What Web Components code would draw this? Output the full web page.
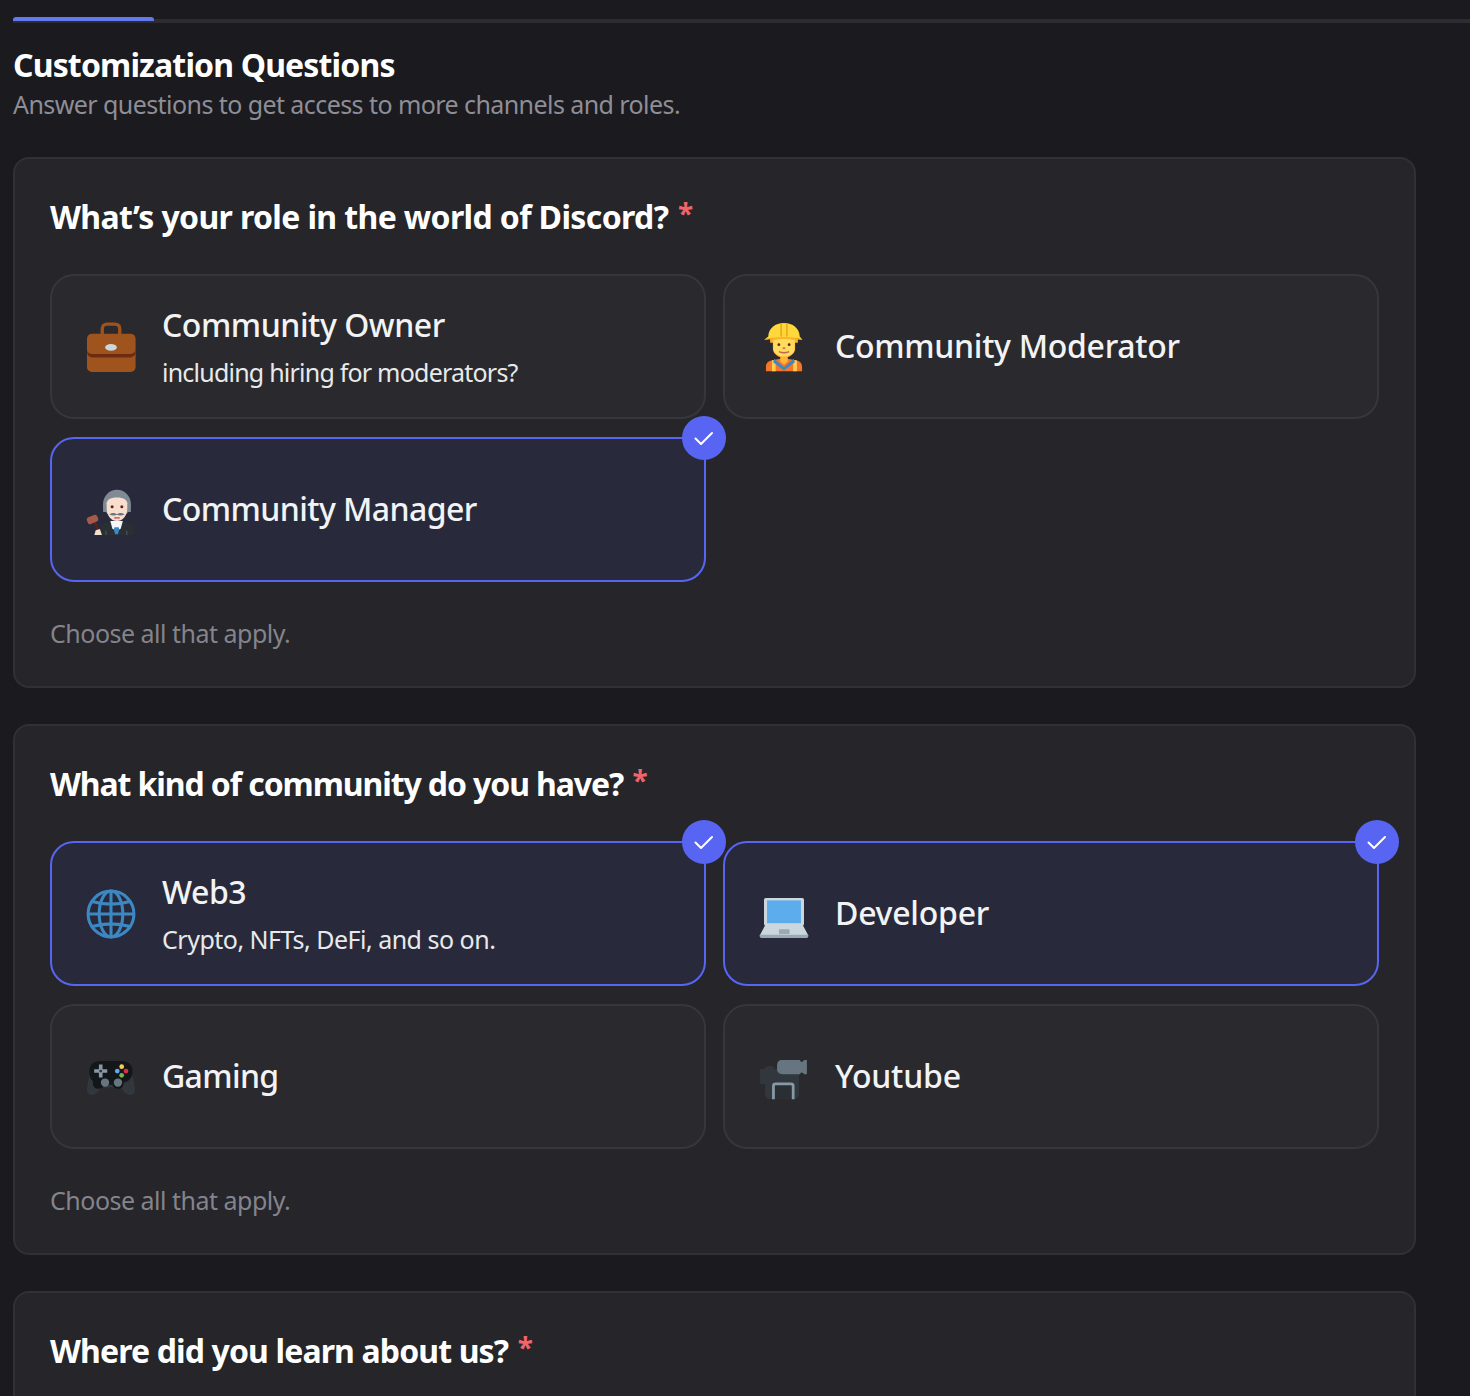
<!DOCTYPE html>
<html>
<head>
<meta charset="utf-8">
<title>Customization Questions</title>
<style>
	html, body { margin: 0; padding: 0; background: #1a1a1f; height: 1396px; overflow: hidden; }
	body { font-family: "Noto Sans", "Open Sans", sans-serif; color: #fff; }
</style>
</head>
<body>
<onboarding-page>
	<progress-line slot="progress" value="141"></progress-line>
	<span slot="title">Customization Questions</span>
	<span slot="subtitle">Answer questions to get access to more channels and roles.</span>

	<question-card style="--tracking: -0.63px" heading="What’s your role in the world of Discord?" hint="Choose all that apply.">
		<question-option>
			<emoji-icon slot="icon" name="briefcase"></emoji-icon>
			Community Owner
			<span slot="sub" style="letter-spacing: -0.78px">including hiring for moderators?</span>
		</question-option>
		<question-option style="--label-tracking: -0.3px">
			<emoji-icon slot="icon" name="worker"></emoji-icon>
			Community Moderator
		</question-option>
		<question-option selected style="--label-tracking: -0.57px">
			<emoji-icon slot="icon" name="judge"></emoji-icon>
			Community Manager
		</question-option>
	</question-card>

	<question-card style="--tracking: -1.1px" heading="What kind of community do you have?" hint="Choose all that apply.">
		<question-option selected>
			<emoji-icon slot="icon" name="globe"></emoji-icon>
			Web3
			<span slot="sub">Crypto, NFTs, DeFi, and so on.</span>
		</question-option>
		<question-option selected style="--label-tracking: -0.25px">
			<emoji-icon slot="icon" name="laptop"></emoji-icon>
			Developer
		</question-option>
		<question-option style="--label-tracking: -0.65px">
			<emoji-icon slot="icon" name="gamepad"></emoji-icon>
			Gaming
		</question-option>
		<question-option style="--label-tracking: -0.2px">
			<emoji-icon slot="icon" name="camera"></emoji-icon>
			Youtube
		</question-option>
	</question-card>

	<question-card style="--tracking: -0.87px" heading="Where did you learn about us?"></question-card>
</onboarding-page>

<script>
const ICONS = {
	briefcase: `
		<path d="M11.700 10V5c0-2.200 1.300-3.500 3.500-3.500h5.600c2.200 0 3.500 1.300 3.500 3.500v5" fill="none" stroke="#a0521c" stroke-width="2.400"/>
		<rect x="0.700" y="8.500" width="35" height="27.500" rx="3.600" fill="#9f541d"/>
		<path d="M0.700 19.500c0 2.500 1.500 3.300 3.500 3.500h27.900c2 -.2 3.600 -1 3.600 -3.500v2c0 2.500-1.600 3.800-3.600 4H4.200c-2 -.2-3.500 -1.500-3.500-4z" fill="#6f2a12"/>
		<ellipse cx="18" cy="18.300" rx="4.200" ry="2.400" fill="#ccd6dd"/>`,
	worker: `
		<path d="M5 35.500v-3.500c0-2.500 2-4 4-4.300l9-1.700 9 1.700c2 .3 4 1.800 4 4.300v3.500z" fill="#f4762a"/>
		<path d="M9.300 27.500h2.700v8H9.300zM24.600 27.500h2.700v8h-2.700z" fill="#ffcc4d"/>
		<path d="M11 26.500l7 6 7-6 .8 2.500-7.800 6-7.800-6z" fill="#3b88c3"/>
		<path d="M15.300 24h5.400v4.500L18 30.800l-2.700-2.300z" fill="#ffb636"/>
		<path d="M8 11h20v4l-2 0v4c0 4-4 6.500-8 6.500s-8-2.500-8-6.500v-4H8z" fill="#ffac33"/>
		<path d="M10.300 13c5-1 10.400-1 15.400 0v6c0 3.500-3.500 5.800-7.700 5.800s-7.700-2.300-7.700-5.800z" fill="#ffdc5d"/>
		<circle cx="14.300" cy="16.300" r="1" fill="#662113"/>
		<circle cx="21.700" cy="16.300" r="1" fill="#662113"/>
		<path d="M14.300 21.300c2.400 1.100 5 1.100 7.400 0" fill="none" stroke="#c1694f" stroke-width="1.100"/>
		<path d="M17 18.300h2v1h-2z" fill="#c1694f"/>
		<path d="M6.700 10.500c0-6 5-9.800 11.300-9.800s11.300 3.800 11.300 9.800l2 2.300c-9-1.500-18.600-1.500-27.600 0z" fill="#ffd83b"/>
		<path d="M15.300 1.300h1.300v9.200h-1.300zM19.400 1.300h1.300v9.200h-1.300zM6.700 11.700c7.300-1 15.300-1 22.600 0l2 1.100c-9-1.500-18.600-1.500-27.600 0z" fill="#f4ab1a"/>`,
	judge: `
		<path d="M10 36v-3c0-4.500 4-6.500 8-6.500h8c4.500 0 9 2 9 6.500v3z" fill="#292f33"/>
		<path d="M17.500 26h9l-1.500 5.500-3 1.500-3-1.500z" fill="#f5f8fa"/>
		<path d="M20.500 30.500h3l.5 1.500-1 3.500h-2l-1-3.500z" fill="#3b88c3"/>
		<path d="M14 33h.8v3H14zM29 33h.8v3H29z" fill="#4b545b"/>
		<circle cx="22.300" cy="13.500" r="10" fill="#7f8a92"/>
		<path d="M14.500 15c0-4.500 3-6 7.800-6s7.800 1.500 7.800 6c0 6.500-3.300 11-7.800 11s-7.800-4.500-7.800-11z" fill="#f7dece"/>
		<path d="M12.300 19.500h2.500v-6h-2.500zM29.800 19.500h2.500v-6h-2.500z" fill="#7f8a92"/>
		<circle cx="18.800" cy="15.700" r="1.100" fill="#662113"/>
		<circle cx="25.800" cy="15.700" r="1.100" fill="#662113"/>
		<path d="M16.800 21.300c2.500-1.800 3.500-1.200 5.500-.3 2-.9 3-1.500 5.500.3-2 1-4 .9-5.500.2-1.500.7-3.500.8-5.500-.2z" fill="#66757f"/>
		<path d="M20.300 23.300h4v.8h-4z" fill="#df1f32"/>
		<path d="M5.500 25l3 7" stroke="#662113" stroke-width="1.300"/>
		<rect x="-4" y="-2.600" width="8" height="5.200" rx="1.700" transform="translate(4.700 24.800) rotate(-22)" fill="#a65a47"/>
		<path d="M6 36l1-3.500 3-.8 1.500 4.300z" fill="#f7dece"/>`,
	globe: `
		<g fill="none" stroke="#3b88c3" stroke-width="2.200">
			<circle cx="18" cy="18" r="16.500"/>
			<ellipse cx="18" cy="18" rx="8.500" ry="16.500"/>
			<path d="M18 1.500v33M1.500 18h33M4.500 9c8 2.500 19 2.500 27 0M4.500 27c8-2.500 19-2.500 27 0"/>
		</g>`,
	laptop: `
		<rect x="3.600" y="6.500" width="28.800" height="20" rx="1.300" fill="#ccd6dd"/>
		<rect x="5.800" y="8.200" width="24.400" height="16.400" fill="#5dadec"/>
		<path d="M4.500 26h27l4 7.500H.5z" fill="#ccd6dd"/>
		<path d="M.5 33h35v1c0 .8-.7 1.300-1.500 1.300H2c-.8 0-1.500-.5-1.500-1.300z" fill="#99aab5"/>
		<rect x="14.300" y="29" width="7.700" height="3.400" rx=".5" fill="#99aab5"/>`,
	gamepad: `
		<path d="M5 12h26c2.500 4 3.800 9 4.200 14 .4 4-1.400 5-3.200 5-2.500 0-5-2.500-7-5.500H11c-2 3-4.500 5.500-7 5.500-1.800 0-3.600-1-3.200-5 .4-5 1.700-10 4.200-14z" fill="#31373d"/>
		<path d="M2.500 14c0-5 3.500-7.500 7.500-7.500h16c4 0 7.500 2.500 7.500 7.500 0 5-3 7.300-6.500 8v1c0 2-1.800 3.500-4 3.500s-3.500-1.300-4-3H13c-.5 1.700-1.800 3-4 3s-4-1.500-4-3.500v-2c-1.600-1.200-2.500-3-2.500-6z" fill="#14171a"/>
		<path d="M9.300 9h2.600v3.400h3.400v2.600h-3.400v3.400H9.300V15H5.900v-2.600h3.400z" fill="#8899a6"/>
		<circle cx="10.600" cy="13.700" r="1" fill="#292f33"/>
		<circle cx="25.700" cy="10.600" r="1.700" fill="#ffcc4d"/>
		<circle cx="22.500" cy="13.700" r="1.700" fill="#5dadec"/>
		<circle cx="28.800" cy="13.700" r="1.700" fill="#dd2e44"/>
		<circle cx="25.700" cy="16.800" r="1.700" fill="#77b255"/>
		<circle cx="13.700" cy="22" r="3" fill="#66757f"/>
		<circle cx="23" cy="22" r="3" fill="#66757f"/>`,
	camera: `
		<path d="M4.300 13c0-2 1-3 3-3h1.500c1.500 0 2.200 1 2.200 2h15c2 0 2.800 1 2.800 3v15.500c0 2.200-1.300 3.500-3.500 3.500H7.800c-2.200 0-3.500-1.300-3.500-3.500V23H2c-.8 0-1.300-.5-1.300-1.300V13.300c0-.8.5-1.300 1.300-1.300h2.300z" fill="#31373d"/>
		<path d="M10.400 34V24.500c0-1 .5-1.500 1.500-1.500h11.200c1 0 1.500.5 1.500 1.500V34" fill="#292f33" stroke="#8899a6" stroke-width="2"/>
		<path d="M13 10c0-3 1.300-4.200 4-4.200h12.200l1.500 1.500 2-1.500h1.800v10.200h-1.800l-2-1.500-1.500 1.500H17c-2.700 0-4-1.300-4-3.500z" fill="#66757f"/>`
};

const CHECK_ICON = `<svg width="24" height="24" viewBox="0 0 24 24" fill="none" stroke="#fff" stroke-width="2" stroke-linecap="round" stroke-linejoin="round"><path d="M3.500 12.500 9 18 20 7"/></svg>`;

class EmojiIcon extends HTMLElement {
	static get observedAttributes() {
		return ['name'];
	}

	constructor() {
		super();
		this.attachShadow({ mode: 'open' });
		this.render();
	}

	attributeChangedCallback() {
		this.render();
	}

	render() {
		const icon = ICONS[this.getAttribute('name')] || '';
		this.shadowRoot.innerHTML = `
			<style>
				:host { display: block; width: 50px; height: 50px; }
				svg { display: block; width: 50px; height: 50px; overflow: visible; }
			</style>
			<svg viewBox="0 0 36 36">${icon}</svg>
		`;
	}
}

class ProgressLine extends HTMLElement {
	constructor() {
		super();
		this.attachShadow({ mode: 'open' });
		const value = this.getAttribute('value') || 0;
		this.shadowRoot.innerHTML = `
			<style>
				:host { display: block; height: 4px; background: #2c2c33; position: relative; }
				.fill { position: absolute; left: 0; top: -2px; width: ${value}px; height: 4px; background: #6579ee; border-radius: 3px 3px 0 0; }
			</style>
			<div class="fill"></div>
		`;
	}
}

class OnboardingPage extends HTMLElement {
	constructor() {
		super();
		this.attachShadow({ mode: 'open' });
		this.shadowRoot.innerHTML = `
			<style>
				:host { display: block; padding: 19px 0 0 13px; }
				header { margin-top: 20px; }
				.title { font-size: 32px; line-height: 44px; font-weight: 700; color: #fff; letter-spacing: -0.85px; }
				.subtitle { font-size: 25px; line-height: 36px; margin-top: -1px; color: #8e8e96; letter-spacing: -0.57px; }
				.cards { display: flex; flex-direction: column; gap: 36px; width: 1403px; margin-top: 35px; }
			</style>
			<slot name="progress"></slot>
			<header>
				<div class="title"><slot name="title"></slot></div>
				<div class="subtitle"><slot name="subtitle"></slot></div>
			</header>
			<div class="cards"><slot></slot></div>
		`;
	}
}

class QuestionCard extends HTMLElement {
	constructor() {
		super();
		this.attachShadow({ mode: 'open' });
		const heading = this.getAttribute('heading') || '';
		const hint = this.getAttribute('hint') || '';
		this.shadowRoot.innerHTML = `
			<style>
				:host { display: block; box-sizing: border-box; background: #25252a; border: 2px solid #303036; border-radius: 16px; padding: 36px 35px 35px; }
				h2 { margin: 0; font-size: 32px; line-height: 44px; font-weight: 700; color: #fff; letter-spacing: var(--tracking, -0.7px); }
				h2 span { color: #f0646a; font-size: 28px; font-weight: 700; position: relative; top: -5px; margin-left: 2px; }
				.options { display: grid; grid-template-columns: 656px 656px; gap: 18px 17px; margin-top: 34px; }
				p { margin: 33px 0 0; font-size: 25px; line-height: 36px; color: #84848c; letter-spacing: -0.5px; }
			</style>
			<h2>${heading} <span>*</span></h2>
			<div class="options"><slot></slot></div>
			${hint ? `<p>${hint}</p>` : ''}
		`;
	}
}

class QuestionOption extends HTMLElement {
	constructor() {
		super();
		this.attachShadow({ mode: 'open' });
		this.shadowRoot.innerHTML = `
			<style>
				:host { display: flex; align-items: center; gap: 26px; box-sizing: border-box; height: 145px; padding: 0 34px; position: relative; background: #29292e; border: 2px solid #36363c; border-radius: 24px; }
				:host([selected]) { background: #282a3c; border-color: #5865f2; }
				.text { display: flex; flex-direction: column; padding-bottom: 1px; }
				.label { font-size: 32px; line-height: 44px; font-weight: 500; color: #f2f3f5; letter-spacing: var(--label-tracking, -0.45px); }
				.sub { font-size: 25px; line-height: 36px; margin-top: 7px; color: #e8e9eb; letter-spacing: -0.5px; }
				.sub:not(.filled) { display: none; }
				.check { display: none; position: absolute; top: -23px; right: -22px; width: 44px; height: 44px; border-radius: 50%; background: #5865f2; align-items: center; justify-content: center; }
				:host([selected]) .check { display: flex; }
			</style>
			<slot name="icon"></slot>
			<div class="text">
				<div class="label"><slot></slot></div>
				<div class="sub"><slot name="sub"></slot></div>
			</div>
			<div class="check">${CHECK_ICON}</div>
		`;
	}

	connectedCallback() {
		const sub = this.shadowRoot.querySelector('.sub');
		sub.classList.toggle('filled', !!this.querySelector('[slot=sub]'));
	}
}

customElements.define('emoji-icon', EmojiIcon);
customElements.define('progress-line', ProgressLine);
customElements.define('onboarding-page', OnboardingPage);
customElements.define('question-card', QuestionCard);
customElements.define('question-option', QuestionOption);
</script>
</body>
</html>
